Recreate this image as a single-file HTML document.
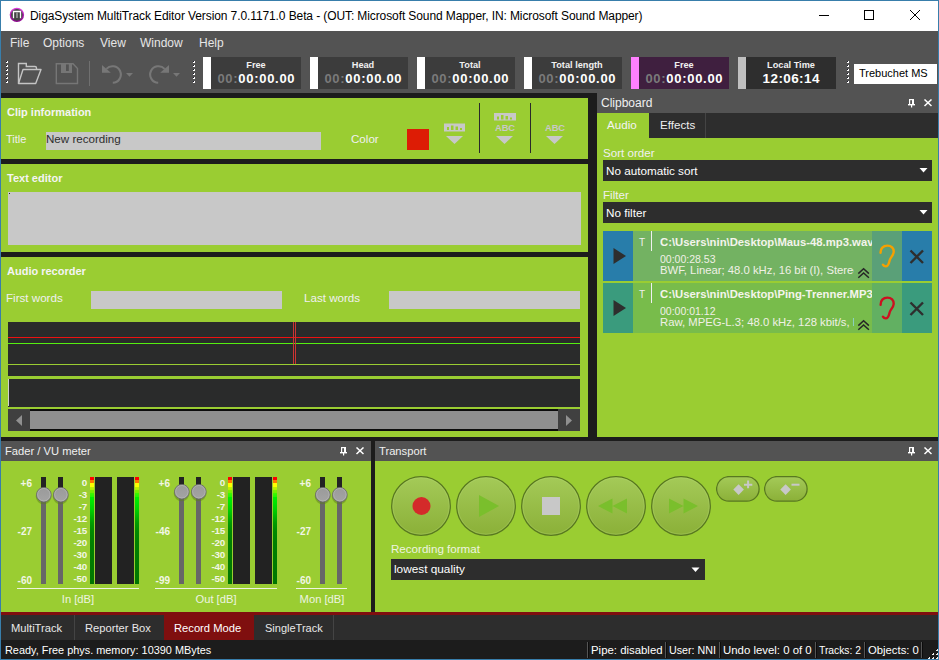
<!DOCTYPE html>
<html><head><meta charset="utf-8">
<style>
*{margin:0;padding:0;box-sizing:border-box}
html,body{width:939px;height:660px;overflow:hidden;background:#387eab}
body{position:relative;font-family:"Liberation Sans",sans-serif;font-size:12px}
.a{position:absolute}
.t{position:absolute;white-space:nowrap;line-height:1}
.g{background:#9acd32}
.dk{background:#1c1c1c}
.gr{background:#535353}
.inp{background:#c8c8c8}
.dd{background:#2d2d2d}
</style></head><body>
<!-- title bar -->
<div class="a" style="left:1px;top:1px;width:937px;height:30px;background:#fff"></div>
<!-- menu + toolbar -->
<div class="a gr" style="left:1px;top:31px;width:937px;height:62px"></div>
<!-- title content -->
<svg class="a" style="left:8px;top:6px" width="18" height="18" viewBox="0 0 18 18">
<defs><linearGradient id="ring" x1="0" y1="0" x2="0" y2="1"><stop offset="0" stop-color="#e040e0"/><stop offset="1" stop-color="#8a008a"/></linearGradient></defs>
<circle cx="8.9" cy="8.85" r="7.2" fill="url(#ring)"/>
<circle cx="8.9" cy="8.85" r="5.8" fill="#454545"/>
<path d="M5.5 12.2V5.5H12.5V12.2" fill="none" stroke="#fff" stroke-width="1.3"/>
<rect x="8.3" y="6.5" width="1.4" height="5.5" fill="#aaa"/>
</svg>
<div class="t" style="left:30px;top:10px;font-size:12px;letter-spacing:-0.1px;color:#000">DigaSystem MultiTrack Editor Version 7.0.1171.0 Beta - (OUT: Microsoft Sound Mapper, IN: Microsoft Sound Mapper)</div>
<div class="a" style="left:819px;top:15px;width:10px;height:1px;background:#000"></div>
<div class="a" style="left:864px;top:10px;width:10px;height:10px;border:1px solid #000"></div>
<svg class="a" style="left:909px;top:9px" width="12" height="12" viewBox="0 0 12 12"><path d="M1 1L11 11M11 1L1 11" stroke="#000" stroke-width="1"/></svg>
<!-- menu -->
<div class="t" style="left:10px;top:37px;color:#e6e6e6">File</div>
<div class="t" style="left:43px;top:37px;color:#e6e6e6">Options</div>
<div class="t" style="left:100px;top:37px;color:#e6e6e6">View</div>
<div class="t" style="left:140px;top:37px;color:#e6e6e6">Window</div>
<div class="t" style="left:199px;top:37px;color:#e6e6e6">Help</div>

<!-- toolbar -->
<div class="a" style="left:6px;top:61px;width:2px;height:2px;background:#fff"></div><div class="a" style="left:6px;top:61px;width:1px;height:1px;background:#1a1a2a"></div><div class="a" style="left:6px;top:65px;width:2px;height:2px;background:#fff"></div><div class="a" style="left:6px;top:65px;width:1px;height:1px;background:#1a1a2a"></div><div class="a" style="left:6px;top:69px;width:2px;height:2px;background:#fff"></div><div class="a" style="left:6px;top:69px;width:1px;height:1px;background:#1a1a2a"></div><div class="a" style="left:6px;top:73px;width:2px;height:2px;background:#fff"></div><div class="a" style="left:6px;top:73px;width:1px;height:1px;background:#1a1a2a"></div><div class="a" style="left:6px;top:77px;width:2px;height:2px;background:#fff"></div><div class="a" style="left:6px;top:77px;width:1px;height:1px;background:#1a1a2a"></div><div class="a" style="left:6px;top:81px;width:2px;height:2px;background:#fff"></div><div class="a" style="left:6px;top:81px;width:1px;height:1px;background:#1a1a2a"></div><svg class="a" style="left:16px;top:61px" width="28" height="26" viewBox="0 0 28 26">
<path d="M2.5 22.5V2.5H10.3V5.5H19Q20.5 5.5 20.5 7V8.5" fill="none" stroke="#c4c4c4" stroke-width="1.4"/>
<path d="M2.5 22.5L7 8.5H25L19.7 22.5Z" fill="none" stroke="#c4c4c4" stroke-width="1.4" stroke-linejoin="round"/>
</svg>
<svg class="a" style="left:53px;top:61px" width="28" height="26" viewBox="0 0 28 26">
<path d="M3.3 2.7H20L24.5 7.5V22.5H3.3Z" fill="none" stroke="#767676" stroke-width="1.4"/>
<path d="M8 2.5H19V12H8Z" fill="#767676"/>
<rect x="13" y="3.4" width="2.8" height="6.6" fill="#535353"/>
</svg>
<div class="a" style="left:89px;top:61px;width:1px;height:25px;background:#707070"></div>
<svg class="a" style="left:100px;top:62px" width="36" height="24" viewBox="0 0 36 24">
<path d="M6.4 6.9A8.3 8.3 0 1 1 12.8 20.8" fill="none" stroke="#777" stroke-width="2.1"/>
<path d="M2 3.1V10.8H10.8Z" fill="#777"/>
<path d="M26 11H33L29.5 14.8Z" fill="#777"/>
</svg>
<svg class="a" style="left:146px;top:62px" width="36" height="24" viewBox="0 0 36 24">
<path d="M18.6 6.9A8.3 8.3 0 1 0 12.2 20.8" fill="none" stroke="#777" stroke-width="2.1"/>
<path d="M23 3.1V10.8H14.2Z" fill="#777"/>
<path d="M27 11H34L30.5 14.8Z" fill="#777"/>
</svg>
<div class="a" style="left:193px;top:61px;width:2px;height:2px;background:#fff"></div><div class="a" style="left:193px;top:61px;width:1px;height:1px;background:#1a1a2a"></div><div class="a" style="left:193px;top:65px;width:2px;height:2px;background:#fff"></div><div class="a" style="left:193px;top:65px;width:1px;height:1px;background:#1a1a2a"></div><div class="a" style="left:193px;top:69px;width:2px;height:2px;background:#fff"></div><div class="a" style="left:193px;top:69px;width:1px;height:1px;background:#1a1a2a"></div><div class="a" style="left:193px;top:73px;width:2px;height:2px;background:#fff"></div><div class="a" style="left:193px;top:73px;width:1px;height:1px;background:#1a1a2a"></div><div class="a" style="left:193px;top:77px;width:2px;height:2px;background:#fff"></div><div class="a" style="left:193px;top:77px;width:1px;height:1px;background:#1a1a2a"></div><div class="a" style="left:193px;top:81px;width:2px;height:2px;background:#fff"></div><div class="a" style="left:193px;top:81px;width:1px;height:1px;background:#1a1a2a"></div><div class="a" style="left:203px;top:57px;width:8px;height:32px;background:#ffffff"></div><div class="a" style="left:211px;top:57px;width:90px;height:32px;background:#3c3c3c"></div><div class="t" style="left:211px;width:90px;text-align:center;top:61px;font-size:9.2px;font-weight:bold;color:#f0f0f0">Free</div><div class="t" style="left:211px;width:90px;text-align:center;top:72px;font-size:13px;font-weight:bold;color:#fff;letter-spacing:0.7px;text-indent:0.7px"><span style="color:#7a7a7a">00:</span>00:00.00</div><div class="a" style="left:310px;top:57px;width:8px;height:32px;background:#ffffff"></div><div class="a" style="left:318px;top:57px;width:90px;height:32px;background:#3c3c3c"></div><div class="t" style="left:318px;width:90px;text-align:center;top:61px;font-size:9.2px;font-weight:bold;color:#f0f0f0">Head</div><div class="t" style="left:318px;width:90px;text-align:center;top:72px;font-size:13px;font-weight:bold;color:#fff;letter-spacing:0.7px;text-indent:0.7px"><span style="color:#7a7a7a">00:</span>00:00.00</div><div class="a" style="left:417px;top:57px;width:8px;height:32px;background:#ffffff"></div><div class="a" style="left:425px;top:57px;width:90px;height:32px;background:#3c3c3c"></div><div class="t" style="left:425px;width:90px;text-align:center;top:61px;font-size:9.2px;font-weight:bold;color:#f0f0f0">Total</div><div class="t" style="left:425px;width:90px;text-align:center;top:72px;font-size:13px;font-weight:bold;color:#fff;letter-spacing:0.7px;text-indent:0.7px"><span style="color:#7a7a7a">00:</span>00:00.00</div><div class="a" style="left:524px;top:57px;width:8px;height:32px;background:#ffffff"></div><div class="a" style="left:532px;top:57px;width:90px;height:32px;background:#3c3c3c"></div><div class="t" style="left:532px;width:90px;text-align:center;top:61px;font-size:9.2px;font-weight:bold;color:#f0f0f0">Total length</div><div class="t" style="left:532px;width:90px;text-align:center;top:72px;font-size:13px;font-weight:bold;color:#fff;letter-spacing:0.7px;text-indent:0.7px"><span style="color:#7a7a7a">00:</span>00:00.00</div><div class="a" style="left:631px;top:57px;width:8px;height:32px;background:#ff80ff"></div><div class="a" style="left:639px;top:57px;width:90px;height:32px;background:#3f1f3f"></div><div class="t" style="left:639px;width:90px;text-align:center;top:61px;font-size:9.2px;font-weight:bold;color:#f0f0f0">Free</div><div class="t" style="left:639px;width:90px;text-align:center;top:72px;font-size:13px;font-weight:bold;color:#fff;letter-spacing:0.7px;text-indent:0.7px"><span style="color:#7a7a7a">00:</span>00:00.00</div><div class="a" style="left:738px;top:57px;width:8px;height:32px;background:#c0c0c0"></div><div class="a" style="left:746px;top:57px;width:90px;height:32px;background:#2e2e2e"></div><div class="t" style="left:746px;width:90px;text-align:center;top:61px;font-size:9.2px;font-weight:bold;color:#f0f0f0">Local Time</div><div class="t" style="left:746px;width:90px;text-align:center;top:72px;font-size:13.5px;font-weight:bold;color:#fff;letter-spacing:0.4px;text-indent:0.4px">12:06:14</div><div class="a" style="left:847px;top:61px;width:2px;height:2px;background:#fff"></div><div class="a" style="left:847px;top:61px;width:1px;height:1px;background:#1a1a2a"></div><div class="a" style="left:847px;top:65px;width:2px;height:2px;background:#fff"></div><div class="a" style="left:847px;top:65px;width:1px;height:1px;background:#1a1a2a"></div><div class="a" style="left:847px;top:69px;width:2px;height:2px;background:#fff"></div><div class="a" style="left:847px;top:69px;width:1px;height:1px;background:#1a1a2a"></div><div class="a" style="left:847px;top:73px;width:2px;height:2px;background:#fff"></div><div class="a" style="left:847px;top:73px;width:1px;height:1px;background:#1a1a2a"></div><div class="a" style="left:847px;top:77px;width:2px;height:2px;background:#fff"></div><div class="a" style="left:847px;top:77px;width:1px;height:1px;background:#1a1a2a"></div><div class="a" style="left:847px;top:81px;width:2px;height:2px;background:#fff"></div><div class="a" style="left:847px;top:81px;width:1px;height:1px;background:#1a1a2a"></div><div class="a" style="left:854px;top:64px;width:83px;height:20px;background:#fff"></div><div class="t" style="left:859px;top:68px;font-size:11px;color:#000">Trebuchet MS</div>

<!-- dark backdrop for docking area -->
<div class="a dk" style="left:1px;top:93px;width:937px;height:522px"></div>
<!-- Clip information -->
<div class="a g" style="left:1px;top:98px;width:587px;height:61px"></div>
<!-- Text editor -->
<div class="a g" style="left:1px;top:164px;width:587px;height:88px"></div>
<!-- Audio recorder -->
<div class="a g" style="left:1px;top:257px;width:587px;height:180px"></div>
<!-- Clipboard -->
<div class="a gr" style="left:597px;top:93px;width:341px;height:20px"></div>
<div class="a dd" style="left:597px;top:113px;width:341px;height:25px"></div>
<div class="a g" style="left:597px;top:138px;width:341px;height:299px"></div>

<!-- Clip information content -->
<div class="t" style="left:7px;top:107px;font-size:11px;font-weight:bold;color:#f4f4f4">Clip information</div>
<div class="t" style="left:6px;top:134px;font-size:11px;color:#f0f0f0">Title</div>
<div class="a inp" style="left:46px;top:132px;width:275px;height:18px"></div>
<div class="t" style="left:46px;top:133px;font-size:11.6px;color:#2e2e2e">New recording</div>
<div class="t" style="left:351px;top:133px;font-size:11.6px;color:#f0f0f0">Color</div>
<div class="a" style="left:407px;top:129px;width:22px;height:21px;background:#dd1c05"></div>
<svg class="a" style="left:440px;top:110px" width="140" height="36" viewBox="0 0 140 36">
<g fill="#c8c8c8">
<rect x="4" y="13.5" width="21" height="8"/>
<path d="M6 26H23L14.5 34Z"/>
<rect x="54" y="3" width="22" height="7.5"/>
<path d="M56 26H73L64.5 34Z"/>
<path d="M106 26H123L114.5 34Z"/>
</g>
<g fill="#9acd32">
<rect x="7" y="17" width="2" height="3"/><rect x="11" y="15.5" width="2.5" height="4.5"/><rect x="15.5" y="16.5" width="2.5" height="3.5"/><rect x="20" y="18" width="2" height="2"/>
<rect x="57" y="6.5" width="2" height="3"/><rect x="61" y="5" width="2.5" height="4.5"/><rect x="65.5" y="6" width="2.5" height="3.5"/><rect x="70" y="7.5" width="2" height="2"/>
</g>
<text x="65" y="21.3" font-family="Liberation Sans" font-weight="bold" font-size="9.3" fill="#c8c8c8" text-anchor="middle">ABC</text>
<text x="115" y="21.3" font-family="Liberation Sans" font-weight="bold" font-size="9.3" fill="#c8c8c8" text-anchor="middle">ABC</text>
</svg>
<div class="a" style="left:479px;top:103px;width:1px;height:50px;background:#2a2a2a"></div>
<div class="a" style="left:530px;top:103px;width:1px;height:50px;background:#2a2a2a"></div>
<!-- Text editor content -->
<div class="t" style="left:7px;top:173px;font-size:11px;font-weight:bold;color:#f4f4f4">Text editor</div>
<div class="a inp" style="left:8px;top:192px;width:573px;height:53px"></div>
<div class="a" style="left:9px;top:193px;width:1px;height:1px;background:#222"></div>
<!-- Audio recorder content -->
<div class="t" style="left:7px;top:266px;font-size:11px;font-weight:bold;color:#f4f4f4">Audio recorder</div>
<div class="t" style="left:6px;top:292px;font-size:11.6px;color:#f0f0f0">First words</div>
<div class="a inp" style="left:91px;top:291px;width:191px;height:18px"></div>
<div class="t" style="left:304px;top:292px;font-size:11.6px;color:#f0f0f0">Last words</div>
<div class="a inp" style="left:389px;top:291px;width:191px;height:18px"></div>
<div class="a" style="left:8px;top:322px;width:572px;height:42px;background:#2a2b2b"></div>
<div class="a" style="left:8px;top:337px;width:572px;height:1px;background:#ee1111"></div>
<div class="a" style="left:8px;top:343px;width:572px;height:1px;background:#55ee11"></div>
<div class="a" style="left:293px;top:322px;width:1px;height:42px;background:#cc3333"></div>
<div class="a" style="left:295px;top:322px;width:1px;height:42px;background:#cc3333"></div>
<div class="a" style="left:8px;top:365px;width:572px;height:11px;background:#2a2b2b"></div>
<div class="a" style="left:8px;top:379px;width:572px;height:28px;background:#2a2b2b"></div>
<div class="a" style="left:8px;top:379px;width:1px;height:27px;background:#d0d0d0"></div>
<div class="a" style="left:8px;top:409px;width:572px;height:22px;background:#0c0c0c"></div>
<div class="a" style="left:8px;top:409px;width:22px;height:22px;background:#404040"></div>
<div class="a" style="left:558px;top:409px;width:22px;height:22px;background:#404040"></div>
<div class="a" style="left:30px;top:411px;width:528px;height:18px;background:#8f8f8f"></div>
<svg class="a" style="left:8px;top:409px" width="572" height="22" viewBox="0 0 572 22">
<path d="M8 11.5L14 6V17Z" fill="#909090"/>
<path d="M564 11.5L558 6V17Z" fill="#909090"/>
</svg>
<!-- Clipboard content -->
<div class="t" style="left:601px;top:97px;font-size:12px;color:#f0f0f0">Clipboard</div>
<svg class="a" style="left:908px;top:99px" width="26" height="10" viewBox="0 0 26 10"><rect x="1" y="0" width="1.2" height="5" fill="#fff"/><rect x="4" y="0" width="2" height="5" fill="#fff"/><rect x="1" y="0" width="5" height="1.2" fill="#fff"/><rect x="0" y="5" width="7" height="1.4" fill="#fff"/><rect x="3" y="6" width="1.2" height="2.5" fill="#fff"/><path d="M16.5 0.5L23.5 7M23.5 0.5L16.5 7" stroke="#fff" stroke-width="1.5"/></svg>
<div class="a g" style="left:597px;top:113px;width:52px;height:25px"></div>
<div class="t" style="left:607px;top:119px;font-size:11.6px;color:#f4f4f4">Audio</div>
<div class="t" style="left:660px;top:119px;font-size:11.6px;color:#f0f0f0">Effects</div>
<div class="a" style="left:705px;top:113px;width:1px;height:25px;background:#444"></div>
<div class="t" style="left:603px;top:147px;font-size:11.6px;color:#f0f0f0">Sort order</div>
<div class="a dd" style="left:603px;top:160px;width:329px;height:21px"></div>
<div class="t" style="left:606px;top:165px;font-size:11.7px;color:#fff">No automatic sort</div>
<div class="t" style="left:603px;top:189px;font-size:11.6px;color:#f0f0f0">Filter</div>
<div class="a dd" style="left:603px;top:202px;width:329px;height:21px"></div>
<div class="t" style="left:606px;top:207px;font-size:11.7px;color:#fff">No filter</div>
<svg class="a" style="left:919px;top:167px" width="10" height="50" viewBox="0 0 10 50"><path d="M0.5 1H8.5L4.5 5.5Z M0.5 43H8.5L4.5 47.5Z" fill="#fff"/></svg>


<!-- clip items -->
<div class="a" style="left:603px;top:231px;width:30px;height:50px;background:#287daa"></div><div class="a" style="left:633px;top:231px;width:239px;height:50px;background:#73b262"></div><div class="a" style="left:872px;top:231px;width:30px;height:50px;background:#5aa078"></div><div class="a" style="left:902px;top:231px;width:30px;height:50px;background:#287daa"></div><svg class="a" style="left:603px;top:231px" width="30" height="50" viewBox="0 0 30 50"><path d="M10.5 17V33L23 25Z" fill="#2e2e2e"/></svg><div class="t" style="left:639px;top:238px;font-size:10px;color:#f0f0f0">T</div><div class="a" style="left:651px;top:231px;width:1px;height:20px;background:#f0f0f0"></div><div class="a" style="left:660px;top:231px;width:212px;height:50px;overflow:hidden"><div class="t" style="left:0;top:6px;font-size:11.3px;font-weight:bold;color:#f4f4ec">C:\Users\nin\Desktop\Maus-48.mp3.wav</div><div class="t" style="left:0;top:23px;font-size:10.5px;color:#f0f0e6">00:00:28.53</div><div class="a" style="left:0;top:34px;width:194px;height:14px;overflow:hidden"><div class="t" style="left:0;top:0px;font-size:11.3px;color:#f0f0e6">BWF, Linear; 48.0 kHz, 16 bit (I), Stereo</div></div></div><svg class="a" style="left:855px;top:266px" width="17" height="13" viewBox="0 0 17 13"><path d="M3.3 3.6L8.6 -1.2L13.9 3.6M3.3 7.8L8.6 3L13.9 7.8" transform="translate(0,4)" fill="none" stroke="#262626" stroke-width="1.5"/></svg><svg class="a" style="left:872px;top:231px" width="30" height="50" viewBox="0 0 30 50"><path d="M8.6 21.8C8.3 17.5 11.3 14.6 15.3 14.6C19.3 14.6 22 17.3 21.7 21C21.4 24.5 18.4 26.5 17.6 29.5C16.9 32.5 16.5 35.4 13.7 35.4C12.3 35.4 11.4 34.5 10.9 33.7" fill="none" stroke="#f5a000" stroke-width="2.4" stroke-linecap="round"/></svg><svg class="a" style="left:902px;top:231px" width="30" height="50" viewBox="0 0 30 50"><path d="M8.5 19.5L21 32M21 19.5L8.5 32" stroke="#2e2e2e" stroke-width="2.4"/></svg><div class="a" style="left:603px;top:283px;width:30px;height:50px;background:#3a9b7d"></div><div class="a" style="left:633px;top:283px;width:239px;height:50px;background:#78bc4b"></div><div class="a" style="left:872px;top:283px;width:30px;height:50px;background:#62b062"></div><div class="a" style="left:902px;top:283px;width:30px;height:50px;background:#3a9b7d"></div><svg class="a" style="left:603px;top:283px" width="30" height="50" viewBox="0 0 30 50"><path d="M10.5 17V33L23 25Z" fill="#2e2e2e"/></svg><div class="t" style="left:639px;top:290px;font-size:10px;color:#f0f0f0">T</div><div class="a" style="left:651px;top:283px;width:1px;height:20px;background:#f0f0f0"></div><div class="a" style="left:660px;top:283px;width:212px;height:50px;overflow:hidden"><div class="t" style="left:0;top:6px;font-size:11.3px;font-weight:bold;color:#f4f4ec">C:\Users\nin\Desktop\Ping-Trenner.MP3</div><div class="t" style="left:0;top:23px;font-size:10.5px;color:#f0f0e6">00:00:01.12</div><div class="a" style="left:0;top:34px;width:194px;height:14px;overflow:hidden"><div class="t" style="left:0;top:0px;font-size:11.3px;color:#f0f0e6">Raw, MPEG-L.3; 48.0 kHz, 128 kbit/s, Mono</div></div></div><svg class="a" style="left:855px;top:318px" width="17" height="13" viewBox="0 0 17 13"><path d="M3.3 3.6L8.6 -1.2L13.9 3.6M3.3 7.8L8.6 3L13.9 7.8" transform="translate(0,4)" fill="none" stroke="#262626" stroke-width="1.5"/></svg><svg class="a" style="left:872px;top:283px" width="30" height="50" viewBox="0 0 30 50"><path d="M8.6 21.8C8.3 17.5 11.3 14.6 15.3 14.6C19.3 14.6 22 17.3 21.7 21C21.4 24.5 18.4 26.5 17.6 29.5C16.9 32.5 16.5 35.4 13.7 35.4C12.3 35.4 11.4 34.5 10.9 33.7" fill="none" stroke="#cc1020" stroke-width="2.4" stroke-linecap="round"/></svg><svg class="a" style="left:902px;top:283px" width="30" height="50" viewBox="0 0 30 50"><path d="M8.5 19.5L21 32M21 19.5L8.5 32" stroke="#2e2e2e" stroke-width="2.4"/></svg>
<!-- Fader -->
<div class="a gr" style="left:1px;top:441px;width:370px;height:20px"></div>
<div class="a g" style="left:1px;top:461px;width:370px;height:151px"></div>
<!-- Transport -->
<div class="a gr" style="left:375px;top:441px;width:563px;height:20px"></div>
<div class="a g" style="left:375px;top:461px;width:563px;height:151px"></div>

<svg width="0" height="0" style="position:absolute"><defs>
<linearGradient id="knob" x1="0" y1="0" x2="0" y2="1"><stop offset="0" stop-color="#9a9a9a"/><stop offset="1" stop-color="#a4a4a4"/></linearGradient>
<linearGradient id="btn" x1="0" y1="0" x2="0" y2="1"><stop offset="0" stop-color="#a4ca58"/><stop offset="1" stop-color="#8bb038"/></linearGradient>
</defs></svg>
<div class="t" style="left:5px;top:446px;font-size:11.2px;color:#f0f0f0">Fader / VU meter</div>
<svg class="a" style="left:340px;top:447px" width="26" height="10" viewBox="0 0 26 10"><rect x="1" y="0" width="1.2" height="5" fill="#fff"/><rect x="4" y="0" width="2" height="5" fill="#fff"/><rect x="1" y="0" width="5" height="1.2" fill="#fff"/><rect x="0" y="5" width="7" height="1.4" fill="#fff"/><rect x="3" y="6" width="1.2" height="2.5" fill="#fff"/><path d="M16.5 0.5L23.5 7M23.5 0.5L16.5 7" stroke="#fff" stroke-width="1.5"/></svg>
<div class="t" style="left:379px;top:446px;font-size:11.2px;color:#f0f0f0">Transport</div>
<svg class="a" style="left:908px;top:447px" width="26" height="10" viewBox="0 0 26 10"><rect x="1" y="0" width="1.2" height="5" fill="#fff"/><rect x="4" y="0" width="2" height="5" fill="#fff"/><rect x="1" y="0" width="5" height="1.2" fill="#fff"/><rect x="0" y="5" width="7" height="1.4" fill="#fff"/><rect x="3" y="6" width="1.2" height="2.5" fill="#fff"/><path d="M16.5 0.5L23.5 7M23.5 0.5L16.5 7" stroke="#fff" stroke-width="1.5"/></svg><div class="t" style="left:-8px;width:40px;text-align:right;top:478.54px;font-size:10.0px;font-weight:bold;color:#f2f6e6">+6</div><div class="t" style="left:-8px;width:40px;text-align:right;top:526.53px;font-size:10.0px;font-weight:bold;color:#f2f6e6">-27</div><div class="t" style="left:-8px;width:40px;text-align:right;top:575.53px;font-size:10.0px;font-weight:bold;color:#f2f6e6">-60</div><div class="a" style="left:41px;top:477px;width:5px;height:107px;background:#676767"></div><div class="a" style="left:41px;top:477px;width:5px;height:17px;background:#232323"></div><svg class="a" style="left:31px;top:483px" width="25" height="25" viewBox="0 0 25 25"><circle cx="12.6" cy="13.4" r="7.8" fill="#5d7d1f" opacity="0.5"/><circle cx="12.85" cy="11.7" r="7.3" fill="url(#knob)" stroke="#6a6a6a" stroke-width="0.9"/><circle cx="12.85" cy="11.7" r="6.25" fill="none" stroke="#b6b6b6" stroke-width="0.9" opacity="0.8"/></svg><div class="a" style="left:58px;top:477px;width:5px;height:107px;background:#676767"></div><div class="a" style="left:58px;top:477px;width:5px;height:17px;background:#232323"></div><svg class="a" style="left:48px;top:483px" width="25" height="25" viewBox="0 0 25 25"><circle cx="12.6" cy="13.4" r="7.8" fill="#5d7d1f" opacity="0.5"/><circle cx="12.85" cy="11.7" r="7.3" fill="url(#knob)" stroke="#6a6a6a" stroke-width="0.9"/><circle cx="12.85" cy="11.7" r="6.25" fill="none" stroke="#b6b6b6" stroke-width="0.9" opacity="0.8"/></svg><div class="t" style="left:47px;width:40px;text-align:right;top:477.7px;font-size:9.8px;font-weight:bold;letter-spacing:-0.25px;color:#f2f6e6">0</div><div class="t" style="left:47px;width:40px;text-align:right;top:489.7px;font-size:9.8px;font-weight:bold;letter-spacing:-0.25px;color:#f2f6e6">-3</div><div class="t" style="left:47px;width:40px;text-align:right;top:501.7px;font-size:9.8px;font-weight:bold;letter-spacing:-0.25px;color:#f2f6e6">-7</div><div class="t" style="left:47px;width:40px;text-align:right;top:513.7px;font-size:9.8px;font-weight:bold;letter-spacing:-0.25px;color:#f2f6e6">-12</div><div class="t" style="left:47px;width:40px;text-align:right;top:525.7px;font-size:9.8px;font-weight:bold;letter-spacing:-0.25px;color:#f2f6e6">-15</div><div class="t" style="left:47px;width:40px;text-align:right;top:537.7px;font-size:9.8px;font-weight:bold;letter-spacing:-0.25px;color:#f2f6e6">-20</div><div class="t" style="left:47px;width:40px;text-align:right;top:549.7px;font-size:9.8px;font-weight:bold;letter-spacing:-0.25px;color:#f2f6e6">-30</div><div class="t" style="left:47px;width:40px;text-align:right;top:561.7px;font-size:9.8px;font-weight:bold;letter-spacing:-0.25px;color:#f2f6e6">-40</div><div class="t" style="left:47px;width:40px;text-align:right;top:573.7px;font-size:9.8px;font-weight:bold;letter-spacing:-0.25px;color:#f2f6e6">-50</div><div class="a" style="left:90px;top:477px;width:4px;height:107px;background:linear-gradient(#ff0000 0,#ff0000 3px,#ff7800 3px,#ff7800 6px,#ffff00 6px,#ffff00 10px,#c4f400 10px,#b0f000 13px,#7cf000 13px,#70f000 16px,#40f800 16px,#20f800 20px,#00f000 20px,#00e400 26px,#00d400 32px,#00b800 39px,#009c00 46px,#008a00 54px,#008000 66px,#007a00 90px,#007600 107px)"></div><div class="a" style="left:135px;top:477px;width:4px;height:107px;background:linear-gradient(#ff0000 0,#ff0000 3px,#ff7800 3px,#ff7800 6px,#ffff00 6px,#ffff00 10px,#c4f400 10px,#b0f000 13px,#7cf000 13px,#70f000 16px,#40f800 16px,#20f800 20px,#00f000 20px,#00e400 26px,#00d400 32px,#00b800 39px,#009c00 46px,#008a00 54px,#008000 66px,#007a00 90px,#007600 107px)"></div><div class="a" style="left:95px;top:477px;width:17px;height:107px;background:#222"></div><div class="a" style="left:117px;top:477px;width:17px;height:107px;background:#222"></div><div class="a" style="left:17px;top:588px;width:122px;height:1px;background:#eef4e0"></div><div class="t" style="left:28px;width:100px;text-align:center;top:594px;font-size:11.2px;color:#eef4e0">In [dB]</div><div class="t" style="left:130px;width:40px;text-align:right;top:478.54px;font-size:10.0px;font-weight:bold;color:#f2f6e6">+6</div><div class="t" style="left:130px;width:40px;text-align:right;top:526.53px;font-size:10.0px;font-weight:bold;color:#f2f6e6">-46</div><div class="t" style="left:130px;width:40px;text-align:right;top:575.53px;font-size:10.0px;font-weight:bold;color:#f2f6e6">-99</div><div class="a" style="left:179px;top:477px;width:5px;height:107px;background:#676767"></div><div class="a" style="left:179px;top:477px;width:5px;height:14px;background:#232323"></div><svg class="a" style="left:169px;top:480px" width="25" height="25" viewBox="0 0 25 25"><circle cx="12.6" cy="13.4" r="7.8" fill="#5d7d1f" opacity="0.5"/><circle cx="12.85" cy="11.7" r="7.3" fill="url(#knob)" stroke="#6a6a6a" stroke-width="0.9"/><circle cx="12.85" cy="11.7" r="6.25" fill="none" stroke="#b6b6b6" stroke-width="0.9" opacity="0.8"/></svg><div class="a" style="left:196px;top:477px;width:5px;height:107px;background:#676767"></div><div class="a" style="left:196px;top:477px;width:5px;height:14px;background:#232323"></div><svg class="a" style="left:186px;top:480px" width="25" height="25" viewBox="0 0 25 25"><circle cx="12.6" cy="13.4" r="7.8" fill="#5d7d1f" opacity="0.5"/><circle cx="12.85" cy="11.7" r="7.3" fill="url(#knob)" stroke="#6a6a6a" stroke-width="0.9"/><circle cx="12.85" cy="11.7" r="6.25" fill="none" stroke="#b6b6b6" stroke-width="0.9" opacity="0.8"/></svg><div class="t" style="left:185px;width:40px;text-align:right;top:477.7px;font-size:9.8px;font-weight:bold;letter-spacing:-0.25px;color:#f2f6e6">0</div><div class="t" style="left:185px;width:40px;text-align:right;top:489.7px;font-size:9.8px;font-weight:bold;letter-spacing:-0.25px;color:#f2f6e6">-3</div><div class="t" style="left:185px;width:40px;text-align:right;top:501.7px;font-size:9.8px;font-weight:bold;letter-spacing:-0.25px;color:#f2f6e6">-7</div><div class="t" style="left:185px;width:40px;text-align:right;top:513.7px;font-size:9.8px;font-weight:bold;letter-spacing:-0.25px;color:#f2f6e6">-12</div><div class="t" style="left:185px;width:40px;text-align:right;top:525.7px;font-size:9.8px;font-weight:bold;letter-spacing:-0.25px;color:#f2f6e6">-15</div><div class="t" style="left:185px;width:40px;text-align:right;top:537.7px;font-size:9.8px;font-weight:bold;letter-spacing:-0.25px;color:#f2f6e6">-20</div><div class="t" style="left:185px;width:40px;text-align:right;top:549.7px;font-size:9.8px;font-weight:bold;letter-spacing:-0.25px;color:#f2f6e6">-30</div><div class="t" style="left:185px;width:40px;text-align:right;top:561.7px;font-size:9.8px;font-weight:bold;letter-spacing:-0.25px;color:#f2f6e6">-40</div><div class="t" style="left:185px;width:40px;text-align:right;top:573.7px;font-size:9.8px;font-weight:bold;letter-spacing:-0.25px;color:#f2f6e6">-50</div><div class="a" style="left:228px;top:477px;width:4px;height:107px;background:linear-gradient(#ff0000 0,#ff0000 3px,#ff7800 3px,#ff7800 6px,#ffff00 6px,#ffff00 10px,#c4f400 10px,#b0f000 13px,#7cf000 13px,#70f000 16px,#40f800 16px,#20f800 20px,#00f000 20px,#00e400 26px,#00d400 32px,#00b800 39px,#009c00 46px,#008a00 54px,#008000 66px,#007a00 90px,#007600 107px)"></div><div class="a" style="left:273px;top:477px;width:4px;height:107px;background:linear-gradient(#ff0000 0,#ff0000 3px,#ff7800 3px,#ff7800 6px,#ffff00 6px,#ffff00 10px,#c4f400 10px,#b0f000 13px,#7cf000 13px,#70f000 16px,#40f800 16px,#20f800 20px,#00f000 20px,#00e400 26px,#00d400 32px,#00b800 39px,#009c00 46px,#008a00 54px,#008000 66px,#007a00 90px,#007600 107px)"></div><div class="a" style="left:233px;top:477px;width:17px;height:107px;background:#222"></div><div class="a" style="left:255px;top:477px;width:17px;height:107px;background:#222"></div><div class="a" style="left:155px;top:588px;width:122px;height:1px;background:#eef4e0"></div><div class="t" style="left:166px;width:100px;text-align:center;top:594px;font-size:11.2px;color:#eef4e0">Out [dB]</div><div class="t" style="left:271px;width:40px;text-align:right;top:478.54px;font-size:10.0px;font-weight:bold;color:#f2f6e6">+6</div><div class="t" style="left:271px;width:40px;text-align:right;top:526.53px;font-size:10.0px;font-weight:bold;color:#f2f6e6">-27</div><div class="t" style="left:271px;width:40px;text-align:right;top:575.53px;font-size:10.0px;font-weight:bold;color:#f2f6e6">-60</div><div class="a" style="left:320px;top:477px;width:5px;height:107px;background:#676767"></div><div class="a" style="left:320px;top:477px;width:5px;height:17px;background:#232323"></div><svg class="a" style="left:310px;top:483px" width="25" height="25" viewBox="0 0 25 25"><circle cx="12.6" cy="13.4" r="7.8" fill="#5d7d1f" opacity="0.5"/><circle cx="12.85" cy="11.7" r="7.3" fill="url(#knob)" stroke="#6a6a6a" stroke-width="0.9"/><circle cx="12.85" cy="11.7" r="6.25" fill="none" stroke="#b6b6b6" stroke-width="0.9" opacity="0.8"/></svg><div class="a" style="left:337px;top:477px;width:5px;height:107px;background:#676767"></div><div class="a" style="left:337px;top:477px;width:5px;height:17px;background:#232323"></div><svg class="a" style="left:327px;top:483px" width="25" height="25" viewBox="0 0 25 25"><circle cx="12.6" cy="13.4" r="7.8" fill="#5d7d1f" opacity="0.5"/><circle cx="12.85" cy="11.7" r="7.3" fill="url(#knob)" stroke="#6a6a6a" stroke-width="0.9"/><circle cx="12.85" cy="11.7" r="6.25" fill="none" stroke="#b6b6b6" stroke-width="0.9" opacity="0.8"/></svg><div class="a" style="left:296px;top:588px;width:51px;height:1px;background:#eef4e0"></div><div class="t" style="left:272px;width:100px;text-align:center;top:594px;font-size:11.2px;color:#eef4e0">Mon [dB]</div><svg class="a" style="left:390px;top:475px" width="62" height="62" viewBox="0 0 62 62"><circle cx="31" cy="31" r="29.3" fill="url(#btn)" stroke="#587820" stroke-width="1.3"/><circle cx="31" cy="31" r="28.2" fill="none" stroke="#b4d676" stroke-width="0.7" opacity="0.5"/><circle cx="31.5" cy="31" r="9" fill="#d42a2a"/></svg><svg class="a" style="left:455px;top:475px" width="62" height="62" viewBox="0 0 62 62"><circle cx="31" cy="31" r="29.3" fill="url(#btn)" stroke="#587820" stroke-width="1.3"/><circle cx="31" cy="31" r="28.2" fill="none" stroke="#b4d676" stroke-width="0.7" opacity="0.5"/><path d="M24 20V42L44 31Z" fill="#7abf2c"/></svg><svg class="a" style="left:520px;top:475px" width="62" height="62" viewBox="0 0 62 62"><circle cx="31" cy="31" r="29.3" fill="url(#btn)" stroke="#587820" stroke-width="1.3"/><circle cx="31" cy="31" r="28.2" fill="none" stroke="#b4d676" stroke-width="0.7" opacity="0.5"/><rect x="22" y="22" width="18" height="18" fill="#c8c8c8"/></svg><svg class="a" style="left:585px;top:475px" width="62" height="62" viewBox="0 0 62 62"><circle cx="31" cy="31" r="29.3" fill="url(#btn)" stroke="#587820" stroke-width="1.3"/><circle cx="31" cy="31" r="28.2" fill="none" stroke="#b4d676" stroke-width="0.7" opacity="0.5"/><path d="M13 31L27.5 23.5V38.5Z M27.5 31L42 23.5V38.5Z" fill="#7abf2c"/></svg><svg class="a" style="left:650px;top:475px" width="62" height="62" viewBox="0 0 62 62"><circle cx="31" cy="31" r="29.3" fill="url(#btn)" stroke="#587820" stroke-width="1.3"/><circle cx="31" cy="31" r="28.2" fill="none" stroke="#b4d676" stroke-width="0.7" opacity="0.5"/><path d="M19 23.5V38.5L33.5 31Z M33.5 23.5V38.5L48 31Z" fill="#7abf2c"/></svg><svg class="a" style="left:716px;top:476px" width="44" height="26" viewBox="0 0 44 26"><rect x="0.6" y="0.6" width="42.5" height="24.6" rx="12.3" fill="url(#btn)" stroke="#587820" stroke-width="1.3"/><path d="M22.6 8.3L27.9 13.6L22.6 18.9L17.3 13.6Z" fill="#c8c8c8"/><path d="M28 8.7H36.3M32.1 4.5V12.2" stroke="#c8c8c8" stroke-width="2"/></svg><svg class="a" style="left:764px;top:476px" width="44" height="26" viewBox="0 0 44 26"><rect x="0.6" y="0.6" width="42.5" height="24.6" rx="12.3" fill="url(#btn)" stroke="#587820" stroke-width="1.3"/><path d="M21.6 8.3L26.9 13.6L21.6 18.9L16.3 13.6Z" fill="#c8c8c8"/><path d="M27.5 8.7H35.5" stroke="#c8c8c8" stroke-width="2"/></svg>
<div class="t" style="left:391px;top:543px;font-size:11.6px;color:#eef4e0">Recording format</div>
<div class="a dd" style="left:391px;top:559px;width:314px;height:21px"></div>
<div class="t" style="left:394px;top:564px;font-size:11.8px;color:#fff">lowest quality</div>
<svg class="a" style="left:691px;top:567px" width="10" height="7" viewBox="0 0 10 7"><path d="M0.5 0.5H8.5L4.5 5Z" fill="#fff"/></svg>

<!-- red line -->
<div class="a" style="left:1px;top:612px;width:937px;height:3px;background:#7f0f0f"></div>
<!-- tabs -->
<div class="a dd" style="left:1px;top:615px;width:937px;height:25px"></div>
<!-- status -->

<div class="a" style="left:164px;top:615px;width:90px;height:25px;background:#7f0f0f"></div>
<div class="a" style="left:74px;top:615px;width:1px;height:25px;background:#444"></div>
<div class="a" style="left:333px;top:615px;width:1px;height:25px;background:#444"></div>
<div class="t" style="left:11px;top:623px;font-size:11.2px;color:#e8e8e8">MultiTrack</div>
<div class="t" style="left:85px;top:623px;font-size:11.2px;color:#e8e8e8">Reporter Box</div>
<div class="t" style="left:174px;top:623px;font-size:11.2px;color:#fff">Record Mode</div>
<div class="t" style="left:265px;top:623px;font-size:11px;color:#e8e8e8">SingleTrack</div>
<div class="a dk" style="left:1px;top:640px;width:937px;height:19px"></div>
<div class="t" style="left:5px;top:645px;font-size:10.9px;color:#fff">Ready, Free phys. memory: 10390 MBytes</div>
<div class="a" style="left:587px;top:642px;width:1px;height:16px;background:#555"></div><div class="a" style="left:588px;top:642px;width:1px;height:16px;background:#0c0c0c"></div><div class="a" style="left:665px;top:642px;width:1px;height:16px;background:#555"></div><div class="a" style="left:666px;top:642px;width:1px;height:16px;background:#0c0c0c"></div><div class="a" style="left:719px;top:642px;width:1px;height:16px;background:#555"></div><div class="a" style="left:720px;top:642px;width:1px;height:16px;background:#0c0c0c"></div><div class="a" style="left:815px;top:642px;width:1px;height:16px;background:#555"></div><div class="a" style="left:816px;top:642px;width:1px;height:16px;background:#0c0c0c"></div><div class="a" style="left:864px;top:642px;width:1px;height:16px;background:#555"></div><div class="a" style="left:865px;top:642px;width:1px;height:16px;background:#0c0c0c"></div><div class="a" style="left:921px;top:642px;width:1px;height:16px;background:#555"></div><div class="a" style="left:922px;top:642px;width:1px;height:16px;background:#0c0c0c"></div>
<div class="t" style="left:591px;top:645px;font-size:11.4px;color:#fff">Pipe: disabled</div>
<div class="t" style="left:669px;top:645px;font-size:10.7px;color:#fff">User: NNI</div>
<div class="t" style="left:723px;top:645px;font-size:11.4px;color:#fff">Undo level: 0 of 0</div>
<div class="t" style="left:819px;top:646px;font-size:10.3px;color:#fff">Tracks: 2</div>
<div class="t" style="left:868px;top:645px;font-size:11.3px;color:#fff">Objects: 0</div>
<div class="a" style="left:936px;top:649px;width:2px;height:2px;background:#eee"></div><div class="a" style="left:936px;top:649px;width:1px;height:1px;background:#111"></div><div class="a" style="left:932px;top:653px;width:2px;height:2px;background:#eee"></div><div class="a" style="left:932px;top:653px;width:1px;height:1px;background:#111"></div><div class="a" style="left:936px;top:653px;width:2px;height:2px;background:#eee"></div><div class="a" style="left:936px;top:653px;width:1px;height:1px;background:#111"></div><div class="a" style="left:928px;top:657px;width:2px;height:2px;background:#eee"></div><div class="a" style="left:928px;top:657px;width:1px;height:1px;background:#111"></div><div class="a" style="left:932px;top:657px;width:2px;height:2px;background:#eee"></div><div class="a" style="left:932px;top:657px;width:1px;height:1px;background:#111"></div><div class="a" style="left:936px;top:657px;width:2px;height:2px;background:#eee"></div><div class="a" style="left:936px;top:657px;width:1px;height:1px;background:#111"></div>

</body></html>
